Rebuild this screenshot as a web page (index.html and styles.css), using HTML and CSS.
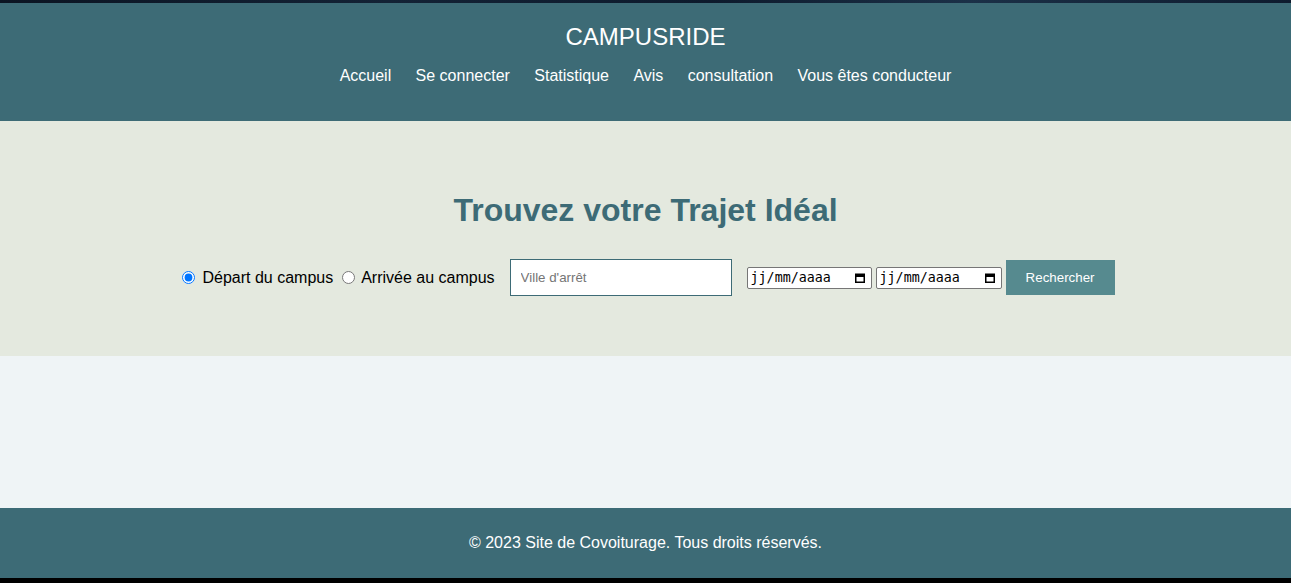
FILE: index.html
```html
<!DOCTYPE html>
<html lang="fr">
<head>
<meta charset="utf-8">
<title>CampusRide</title>
<link rel="stylesheet" href="styles.css">
</head>
<body>
<div class="top-strip"></div>
<header class="site-header">
  <h1 class="brand">CAMPUSRIDE</h1>
  <nav>
    <ul class="nav-list">
      <li><a href="#">Accueil</a></li>
      <li><a href="#">Se connecter</a></li>
      <li><a href="#">Statistique</a></li>
      <li><a href="#">Avis</a></li>
      <li><a href="#">consultation</a></li>
      <li><a href="#">Vous êtes conducteur</a></li>
    </ul>
  </nav>
</header>
<section class="hero">
  <h2 class="hero-title">Trouvez votre Trajet Idéal</h2>
  <form class="search-form">
    <input class="radio radio-first" type="radio" name="dir" id="dep" checked>
    <label class="radio-label" for="dep">Départ du campus</label>
    <input class="radio radio-second" type="radio" name="dir" id="arr">
    <label class="radio-label" for="arr">Arrivée au campus</label>
    <input class="city" type="text" placeholder="Ville d'arrêt">
    <span class="date date-first"><span class="date-text">jj/mm/aaaa</span><svg class="cal" width="10" height="10" viewBox="0 0 10 10"><rect x="0.75" y="1.25" width="8.5" height="8" fill="none" stroke="#000" stroke-width="1.5"/><rect x="0" y="1" width="10" height="3" fill="#000"/></svg></span>
    <span class="date date-second"><span class="date-text">jj/mm/aaaa</span><svg class="cal" width="10" height="10" viewBox="0 0 10 10"><rect x="0.75" y="1.25" width="8.5" height="8" fill="none" stroke="#000" stroke-width="1.5"/><rect x="0" y="1" width="10" height="3" fill="#000"/></svg></span>
    <button class="search-btn" type="button">Rechercher</button>
  </form>
</section>
<main class="content"></main>
<footer class="site-footer">
  <p>© 2023 Site de Covoiturage. Tous droits réservés.</p>
</footer>
</body>
</html>
```

FILE: styles.css
```css
html, body {
  margin: 0;
  padding: 0;
}
body {
  background: #000;
  font-family: "Liberation Sans", Arial, sans-serif;
}
.top-strip {
  height: 3px;
  background: linear-gradient(90deg, #0b1422 0%, #132235 30%, #0d1a2c 55%, #1b3047 75%, #0e1b2e 100%);
}
.site-header {
  background: #3d6b76;
  color: #fff;
  text-align: center;
  padding: 20px 0 36px;
}
.brand {
  margin: 0;
  font-size: 24px;
  font-weight: normal;
  line-height: 28px;
}
.nav-list {
  list-style: none;
  margin: 16px 0 0;
  padding: 0;
  display: flex;
  justify-content: center;
  gap: 24.4px;
  font-size: 16px;
  line-height: 18px;
}
.nav-list a {
  color: #fff;
  text-decoration: none;
}
.hero {
  background: #e4e9df;
  padding: 71px 0 60px;
  text-align: center;
}
.hero-title {
  margin: 0 0 30px;
  font-size: 32px;
  line-height: 37px;
  color: #3d6b76;
  font-weight: bold;
}
.search-form {
  display: flex;
  justify-content: center;
  align-items: center;
  height: 37px;
  padding-left: 6px;
  font-size: 16px;
  color: #000;
}
.radio {
  width: 13px;
  height: 13px;
  margin: 0;
}
.radio-first {
  margin-right: 7px;
}
.radio-second {
  margin-left: 9px;
  margin-right: 6px;
}
.city {
  box-sizing: border-box;
  width: 222px;
  height: 37px;
  margin-left: 15px;
  padding: 10px;
  border: 1px solid #3d6b76;
  border-radius: 0;
  background: #fff;
  font-family: "Liberation Sans", Arial, sans-serif;
  font-size: 13.33px;
  outline: none;
}
.city::placeholder {
  color: #757575;
}
.date {
  box-sizing: border-box;
  display: flex;
  align-items: center;
  justify-content: space-between;
  width: 125px;
  height: 22px;
  padding: 0 6px 0 3px;
  border: 1px solid #767676;
  border-radius: 2px;
  background: #fff;
  font-family: "DejaVu Sans Mono", "Liberation Mono", monospace;
  font-size: 13.33px;
  color: #000;
}
.date-first {
  margin-left: 15px;
}
.date-second {
  margin-left: 4px;
  width: 126px;
}
.cal {
  display: block;
}
.search-btn {
  box-sizing: border-box;
  width: 109px;
  height: 35px;
  margin-left: 4px;
  padding: 0;
  border: none;
  background: #568a8f;
  color: #fff;
  font-family: "Liberation Sans", Arial, sans-serif;
  font-size: 13.33px;
}
.content {
  display: block;
  background: #eff4f6;
  height: 152px;
}
.site-footer {
  background: #3d6b76;
  color: #fff;
  text-align: center;
  padding: 26px 0;
}
.site-footer p {
  margin: 0;
  font-size: 16px;
  line-height: 18px;
}
```
